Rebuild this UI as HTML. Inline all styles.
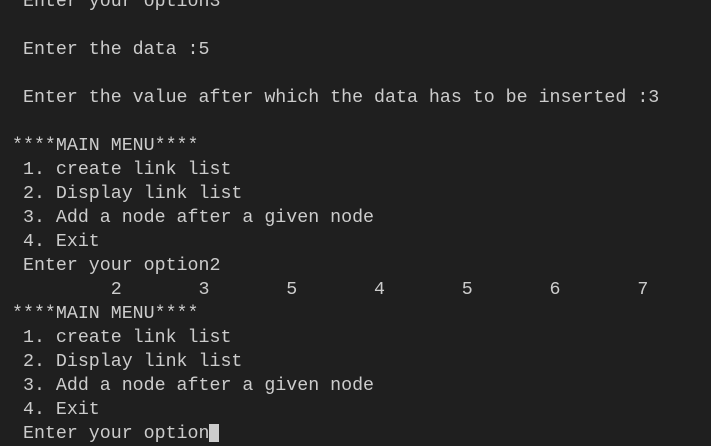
<!DOCTYPE html>
<html><head><style>
html,body{margin:0;padding:0;background:#1f1f1f;width:711px;height:434px;overflow:hidden}
pre{position:absolute;left:12px;top:-10px;margin:0;font-family:"Liberation Mono",monospace;font-size:18.3px;line-height:24px;color:#cccccc;white-space:pre}
.cur{display:inline-block;width:10px;height:18px;background:#cccccc;vertical-align:-4px}
</style></head><body>
<pre> Enter your option3

 Enter the data :5

 Enter the value after which the data has to be inserted :3

****MAIN MENU****
 1. create link list
 2. Display link list
 3. Add a node after a given node
 4. Exit
 Enter your option2
         2       3       5       4       5       6       7
****MAIN MENU****
 1. create link list
 2. Display link list
 3. Add a node after a given node
 4. Exit
 Enter your option<span class="cur"></span></pre>
</body></html>
